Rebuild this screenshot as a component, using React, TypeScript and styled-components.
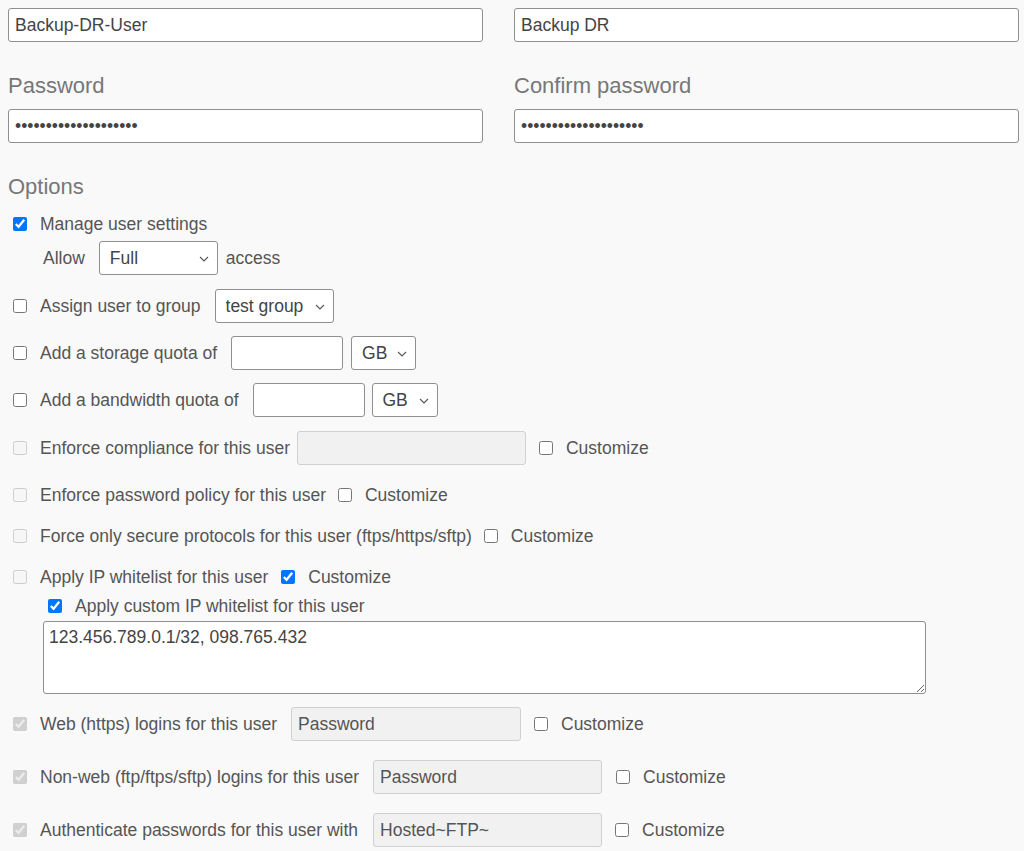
import React from "react";
import styled, { createGlobalStyle } from "styled-components";

const Global = createGlobalStyle`
  html, body { margin: 0; padding: 0; background: #f9f9f9; }
  body { font-family: "Liberation Sans", Arial, sans-serif; color: #555; }
  * { box-sizing: border-box; }
`;

const FONT = 17.5;

const Page = styled.div`
  padding: 8px 5px 0 8px;
  width: 1024px;
`;

const TopGrid = styled.div`
  display: grid;
  grid-template-columns: 475px 505px;
  column-gap: 31px;
`;

const Field = styled.div`
  display: flex;
  flex-direction: column;
`;

const Heading = styled.div<{ $mt: number }>`
  font-size: 22px;
  line-height: 26px;
  color: #777;
  margin-top: ${(p) => p.$mt}px;
`;

const TextInput = styled.input<{ $w?: number; $mt?: number }>`
  height: 34px;
  width: ${(p) => (p.$w ? `${p.$w}px` : "100%")};
  margin-top: ${(p) => p.$mt ?? 0}px;
  border: 1px solid #8f8f8f;
  border-radius: 3px;
  background: #fff;
  padding: 0 6px;
  font-family: "Liberation Sans", Arial, sans-serif;
  font-size: ${FONT}px;
  color: #444;
  outline: none;
  flex: none;
  &:disabled {
    background: #f1f1f1;
    border-color: #d0d0d0;
    color: #555;
  }
`;

const Options = styled.div`
  display: flex;
  flex-direction: column;
`;

const Row = styled.div<{ $mt: number; $h: number; $indent?: number }>`
  display: flex;
  align-items: center;
  height: ${(p) => p.$h}px;
  margin-top: ${(p) => p.$mt}px;
  padding-left: ${(p) => p.$indent ?? 0}px;
  font-size: ${FONT}px;
  white-space: nowrap;
`;

const Check = styled.input.attrs({ type: "checkbox" })<{ $ml?: number }>`
  width: 14px;
  height: 14px;
  margin: 0 13px 0 ${(p) => p.$ml ?? 5}px;
  flex: none;
  accent-color: #0075ff;
`;

const Label = styled.span`
  color: #555;
`;

const Gap = styled.span<{ $w: number }>`
  display: inline-block;
  width: ${(p) => p.$w}px;
  flex: none;
`;

const SelectWrap = styled.div<{ $w: number }>`
  position: relative;
  width: ${(p) => p.$w}px;
  height: 34px;
  flex: none;
`;

const Select = styled.select`
  appearance: none;
  -webkit-appearance: none;
  width: 100%;
  height: 100%;
  border: 1px solid #8f8f8f;
  border-radius: 3px;
  background: #fff;
  padding: 0 24px 0 10px;
  font-family: "Liberation Sans", Arial, sans-serif;
  font-size: ${FONT}px;
  color: #444;
  outline: none;
`;

const Chevron = styled.svg`
  position: absolute;
  right: 9px;
  top: 15px;
  width: 10px;
  height: 6px;
  pointer-events: none;
`;

const TextArea = styled.textarea`
  display: block;
  margin: 3px 0 0 35px;
  width: 883px;
  height: 73px;
  border: 1px solid #8f8f8f;
  border-radius: 3px;
  background: #fff;
  padding: 5px 5px;
  font-family: "Liberation Sans", Arial, sans-serif;
  font-size: ${FONT}px;
  line-height: 20px;
  color: #444;
  outline: none;
`;

function Dropdown({ w, value, options }: { w: number; value: string; options: string[] }) {
  return (
    <SelectWrap $w={w}>
      <Select defaultValue={value}>
        {options.map((o) => (
          <option key={o}>{o}</option>
        ))}
      </Select>
      <Chevron viewBox="0 0 10 6">
        <path d="M1 1 L5 5 L9 1" fill="none" stroke="#555" strokeWidth="1.1" />
      </Chevron>
    </SelectWrap>
  );
}

function Customize({ ml }: { ml: number }) {
  return (
    <>
      <Check $ml={ml} />
      <Label>Customize</Label>
    </>
  );
}

export default function App() {
  return (
    <Page>
      <Global />
      <TopGrid>
        <Field>
          <TextInput defaultValue="Backup-DR-User" />
          <Heading $mt={31}>Password</Heading>
          <TextInput type="password" defaultValue="abcdefghijklmnopqrst" $mt={10} />
        </Field>
        <Field>
          <TextInput defaultValue="Backup DR" />
          <Heading $mt={31}>Confirm password</Heading>
          <TextInput type="password" defaultValue="abcdefghijklmnopqrst" $mt={10} />
        </Field>
      </TopGrid>

      <Heading $mt={31}>Options</Heading>

      <Options>
        <Row $mt={10} $h={28}>
          <Check defaultChecked />
          <Label>Manage user settings</Label>
        </Row>
        <Row $mt={3} $h={34} $indent={35}>
          <Label>Allow</Label>
          <Gap $w={14} />
          <Dropdown w={119} value="Full" options={["Full", "Read only", "None"]} />
          <Gap $w={8} />
          <Label>access</Label>
        </Row>
        <Row $mt={14} $h={34}>
          <Check />
          <Label>Assign user to group</Label>
          <Gap $w={14} />
          <Dropdown w={119} value="test group" options={["test group"]} />
        </Row>
        <Row $mt={13} $h={34}>
          <Check />
          <Label>Add a storage quota of</Label>
          <Gap $w={14} />
          <TextInput $w={112} />
          <Gap $w={8} />
          <Dropdown w={65} value="GB" options={["MB", "GB", "TB"]} />
        </Row>
        <Row $mt={13} $h={34}>
          <Check />
          <Label>Add a bandwidth quota of</Label>
          <Gap $w={14} />
          <TextInput $w={112} />
          <Gap $w={7} />
          <Dropdown w={66} value="GB" options={["MB", "GB", "TB"]} />
        </Row>
        <Row $mt={14} $h={34}>
          <Check disabled />
          <Label>Enforce compliance for this user</Label>
          <Gap $w={7} />
          <TextInput $w={229} disabled />
          <Customize ml={13} />
        </Row>
        <Row $mt={16} $h={28}>
          <Check disabled />
          <Label>Enforce password policy for this user</Label>
          <Customize ml={12} />
        </Row>
        <Row $mt={13} $h={28}>
          <Check disabled />
          <Label>Force only secure protocols for this user (ftps/https/sftp)</Label>
          <Customize ml={12} />
        </Row>
        <Row $mt={13} $h={28}>
          <Check disabled />
          <Label>Apply IP whitelist for this user</Label>
          <Check $ml={13} defaultChecked />
          <Label>Customize</Label>
        </Row>
        <Row $mt={3} $h={24} $indent={35}>
          <Check defaultChecked />
          <Label>Apply custom IP whitelist for this user</Label>
        </Row>
        <TextArea defaultValue="123.456.789.0.1/32, 098.765.432" />
        <Row $mt={13} $h={34}>
          <Check disabled defaultChecked />
          <Label>Web (https) logins for this user</Label>
          <Gap $w={14} />
          <TextInput $w={230} disabled defaultValue="Password" />
          <Customize ml={13} />
        </Row>
        <Row $mt={19} $h={34}>
          <Check disabled defaultChecked />
          <Label>Non-web (ftp/ftps/sftp) logins for this user</Label>
          <Gap $w={14} />
          <TextInput $w={229} disabled defaultValue="Password" />
          <Customize ml={14} />
        </Row>
        <Row $mt={19} $h={34}>
          <Check disabled defaultChecked />
          <Label>Authenticate passwords for this user with</Label>
          <Gap $w={15} />
          <TextInput $w={229} disabled defaultValue="Hosted~FTP~" />
          <Customize ml={13} />
        </Row>
      </Options>
    </Page>
  );
}
